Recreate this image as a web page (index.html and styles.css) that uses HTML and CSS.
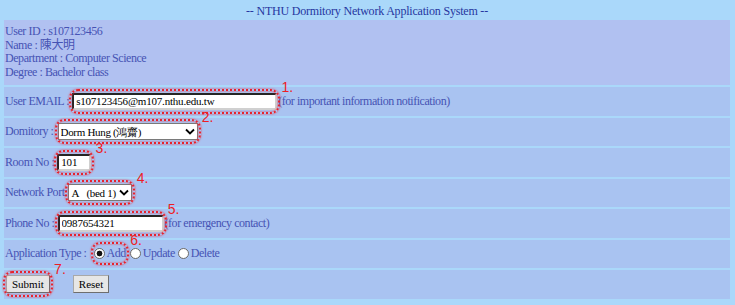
FILE: index.html
```html
<!DOCTYPE html>
<html lang="en">
<head>
    <meta charset="UTF-8">
    <title>NTHU Dormitory Network Application System</title>
    <link rel="stylesheet" href="styles.css">
</head>
<body>

    <div class="page-title">-- NTHU Dormitory Network Application System --</div>

    <form class="apply-form">

        <!-- student info -->
        <div class="info-row">
            <p>User ID : s107123456</p>
            <p>Name : 陳大明</p>
            <p>Department : Computer Science</p>
            <p>Degree : Bachelor class</p>
        </div>

        <div class="row">
            <span>User EMAIL :</span>
            <span class="mark mark-email">
                <input class="field email-field" type="text" value="s107123456@m107.nthu.edu.tw">
                <span class="mark-num">1.</span>
            </span>
            <span class="note">(for important information notification)</span>
        </div>

        <div class="row">
            <span>Domitory :</span>
            <span class="mark mark-dorm">
                <span class="pick-wrap">
                    <select class="pick dorm-pick">
                        <option>Dorm Hung (鴻齋)</option>
                    </select>
                    <svg class="chevron" width="10" height="7" viewBox="0 0 10 7"><path d="M1 1.5 L5 5.5 L9 1.5" fill="none" stroke="#000" stroke-width="1.8"/></svg>
                </span>
                <span class="mark-num">2.</span>
            </span>
        </div>

        <div class="row">
            <span>Room No :</span>
            <span class="mark mark-room">
                <input class="field room-field" type="text" value="101">
                <span class="mark-num">3.</span>
            </span>
        </div>

        <div class="row">
            <span>Network Port:</span>
            <span class="mark mark-port">
                <span class="pick-wrap">
                    <select class="pick port-pick">
                        <option>A&nbsp;&nbsp;&nbsp;(bed 1)</option>
                    </select>
                    <svg class="chevron" width="10" height="7" viewBox="0 0 10 7"><path d="M1 1.5 L5 5.5 L9 1.5" fill="none" stroke="#000" stroke-width="1.8"/></svg>
                </span>
                <span class="mark-num">4.</span>
            </span>
        </div>

        <div class="row">
            <span>Phone No :</span>
            <span class="mark mark-phone">
                <input class="field phone-field" type="text" value="0987654321">
                <span class="mark-num">5.</span>
            </span>
            <span class="note">(for emergency contact)</span>
        </div>

        <div class="row">
            <span>Application Type :</span>
            <span class="mark mark-type">
                <label class="opt"><input type="radio" name="type" checked>Add</label>
                <span class="mark-num">6.</span>
            </span>
            <label class="opt"><input type="radio" name="type">Update</label>
            <label class="opt opt-last"><input type="radio" name="type">Delete</label>
        </div>

        <div class="row">
            <span class="mark mark-submit">
                <button class="btn" type="button">Submit</button>
                <span class="mark-num">7.</span>
            </span>
            <button class="btn reset-btn" type="button">Reset</button>
        </div>

    </form>

</body>
</html>
```

FILE: styles.css
```css
body {
    margin: 0;
    padding: 0 5px 0 4px;
    background-color: #aad8fa;
    font-family: "Liberation Serif", "Noto Sans CJK TC", serif;
    font-size: 12px;
    letter-spacing: -0.45px;
    color: #4653b4;
}

.page-title {
    height: 20px;
    line-height: 22px;
    text-align: center;
    letter-spacing: -0.2px;
    color: #2636a0;
}

.apply-form {
    display: flex;
    flex-direction: column;
    gap: 2px;
}

.info-row {
    height: 65px;
    box-sizing: border-box;
    padding: 5px 0 0 1px;
    background-color: #b1c1f1;
}

.info-row p {
    margin: 0;
    line-height: 13.5px;
}

.row {
    height: 28.5px;
    display: flex;
    align-items: center;
    padding-left: 1px;
    background-color: #a9c3f1;
}

/* red hand-drawn style annotations */
.mark {
    position: relative;
    display: inline-flex;
    align-items: center;
}

.mark::after {
    content: "";
    position: absolute;
    inset: -4px -3px -4px -3px;
    border: 2px dotted #e8222c;
    border-radius: 9px;
    box-shadow: 0 0 2px #f03a48, inset 0 0 2px #f03a48;
    pointer-events: none;
}

.mark-num {
    position: absolute;
    top: -14px;
    right: -16px;
    font-family: "Liberation Sans", sans-serif;
    font-size: 14px;
    letter-spacing: 0;
    color: #ee1c24;
}

.field {
    height: 17px;
    box-sizing: border-box;
    margin: 0;
    padding: 0 2px;
    border: 2px inset #d0d0d0;
    border-top-color: #7a7a7a;
    border-left-color: #7a7a7a;
    background: #fff;
    font-family: "Liberation Serif", serif;
    font-size: 11px;
    letter-spacing: -0.2px;
    color: #000;
}

.email-field { width: 205px; }
.room-field { width: 34px; }
.phone-field { width: 106px; }

.mark-email { margin-left: 3px; }
.mark-room { margin-left: 3px; }
.mark-phone { margin-left: 3px; }
.mark-dorm { margin-left: 4px; }
.mark-port { margin-left: 1px; }

.pick-wrap {
    position: relative;
    display: inline-flex;
}

.pick {
    appearance: none;
    height: 17px;
    margin: 0;
    padding: 0 12px 0 2px;
    border: 1px solid #7a7a7a;
    border-radius: 0;
    background: #fff;
    font-family: "Liberation Serif", serif;
    font-size: 11px;
    letter-spacing: -0.3px;
    color: #000;
}

.chevron {
    position: absolute;
    right: 3px;
    top: 5px;
    pointer-events: none;
}

.dorm-pick { width: 140px; }
.port-pick { width: 64px; }

.note {
    margin-left: 1px;
}

.opt {
    display: inline-flex;
    align-items: center;
}

.opt input {
    appearance: none;
    width: 11px;
    height: 11px;
    margin: 0 2px 0 0;
    border: 1px solid #6a6a6a;
    border-radius: 50%;
    background: #fff;
}

.opt input:checked {
    background: radial-gradient(circle, #111 0 2.6px, #fff 3.2px);
}

.mark-type {
    margin-left: 7px;
    margin-right: 4px;
}

.opt-last { margin-left: 3px; }

.btn {
    height: 18px;
    margin: 0;
    padding: 0 5px;
    background: #e6e6e6;
    border: 1px solid #6e6e6e;
    border-top-color: #a8a8a8;
    border-left-color: #a8a8a8;
    font-family: "Liberation Serif", serif;
    font-size: 11px;
    color: #000;
}

.mark-submit { margin-left: 1px; }

.reset-btn { margin-left: 23px; }
```
